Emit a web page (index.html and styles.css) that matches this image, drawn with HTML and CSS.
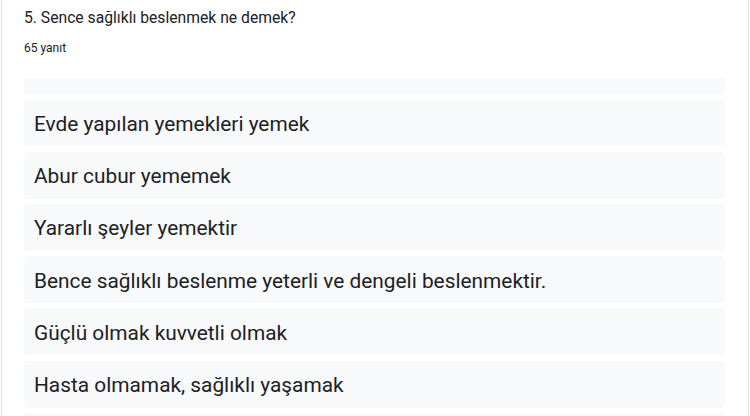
FILE: index.html
```html
<!DOCTYPE html>
<html lang="tr">
<head>
<meta charset="utf-8">
<link rel="stylesheet" href="styles.css">
</head>
<body>
<div class="card">
  <div class="title">5. Sence sağlıklı beslenmek ne demek?</div>
  <div class="count">65 yanıt</div>
  <div class="list">
    <div class="rows">
      <div class="row"></div>
      <div class="row">Evde yapılan yemekleri yemek</div>
      <div class="row">Abur cubur yememek</div>
      <div class="row">Yararlı şeyler yemektir</div>
      <div class="row">Bence sağlıklı beslenme yeterli ve dengeli beslenmektir.</div>
      <div class="row">Güçlü olmak kuvvetli olmak</div>
      <div class="row">Hasta olmamak, sağlıklı yaşamak</div>
      <div class="row"></div>
    </div>
  </div>
</div>
</body>
</html>
```

FILE: styles.css
```css
html, body {
  margin: 0;
  padding: 0;
  background: #ffffff;
}
body {
  padding-left: 1px;
  font-family: Roboto, "Noto Sans", Arial, sans-serif;
  color: #202124;
}
.card {
  width: 748px;
  height: 416px;
  border-left: 1px solid #e2e3e6;
  border-right: 1px solid #e2e3e6;
  padding: 0 23px 0 22px;
  box-sizing: border-box;
  overflow: hidden;
}
.title {
  font-size: 15.7px;
  line-height: 20px;
  padding-top: 8px;
}
.count {
  font-size: 12px;
  line-height: 16px;
  padding-top: 12px;
}
.list {
  margin-top: 22px;
  height: 338px;
  overflow: hidden;
}
.rows {
  display: flex;
  flex-direction: column;
  gap: 5.25px;
  margin-top: -31px;
}
.row {
  height: 47px;
  box-sizing: border-box;
  flex: none;
  background: #f8f9fa;
  border-radius: 4px;
  padding: 2px 10px 0;
  display: flex;
  align-items: center;
  font-size: 20.85px;
  color: #202124;
  white-space: nowrap;
}
```
